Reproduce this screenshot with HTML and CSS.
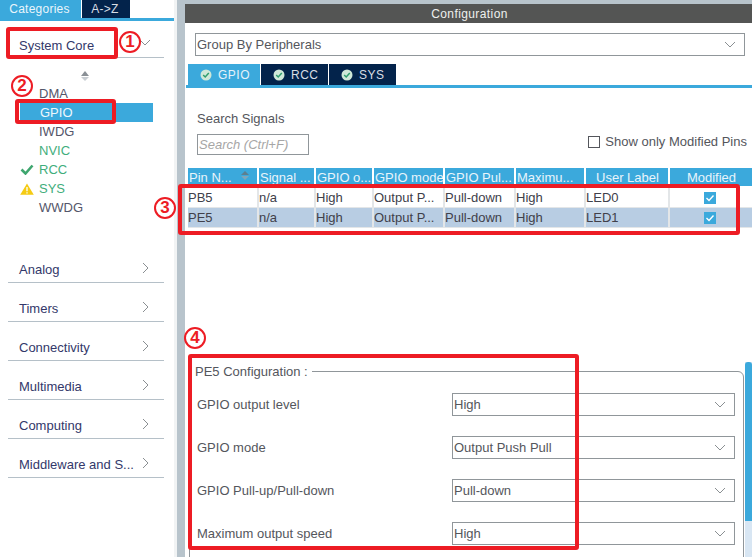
FILE: index.html
```html
<!DOCTYPE html>
<html lang="en">
<head>
<meta charset="utf-8">
<title>Pinout and Configuration</title>
<link rel="stylesheet" href="styles.css">
</head>
<body>
<div class="app">
  <aside class="side">
    <div class="side-tabs">
      <div class="side-tab on">Categories</div>
      <div class="side-tab">A-&gt;Z</div>
    </div>
    <div class="cat open"><span>System Core</span>
      <svg class="chev-d" width="12" height="8" viewBox="0 0 12 8"><path d="M1 1l5 5 5-5" fill="none" stroke="#8a8f92"/></svg>
    </div>
    <div class="sorter"><i class="up"></i><i class="down"></i></div>
    <ul class="tree">
      <li>DMA</li>
      <li class="sel">GPIO</li>
      <li>IWDG</li>
      <li class="green">NVIC</li>
      <li class="green"><svg class="mark" width="14" height="11" viewBox="0 0 14 11"><path d="M1.5 5.5l4 4 7-8" fill="none" stroke="#3fa66f" stroke-width="2.6"/></svg>RCC</li>
      <li class="green"><svg class="mark" width="14" height="12" viewBox="0 0 14 12"><path d="M7 0.5L13.8 11.8H0.2z" fill="#f5cb13"/><path d="M7 4v4.2M7 9.2v1.4" stroke="#fff" stroke-width="1.3"/></svg>SYS</li>
      <li>WWDG</li>
    </ul>
    <div class="cats">
      <div class="cat"><span>Analog</span><svg class="chev-r" width="8" height="12" viewBox="0 0 8 12"><path d="M1 1l5 5-5 5" fill="none" stroke="#8a8f92"/></svg></div>
      <div class="cat"><span>Timers</span><svg class="chev-r" width="8" height="12" viewBox="0 0 8 12"><path d="M1 1l5 5-5 5" fill="none" stroke="#8a8f92"/></svg></div>
      <div class="cat"><span>Connectivity</span><svg class="chev-r" width="8" height="12" viewBox="0 0 8 12"><path d="M1 1l5 5-5 5" fill="none" stroke="#8a8f92"/></svg></div>
      <div class="cat"><span>Multimedia</span><svg class="chev-r" width="8" height="12" viewBox="0 0 8 12"><path d="M1 1l5 5-5 5" fill="none" stroke="#8a8f92"/></svg></div>
      <div class="cat"><span>Computing</span><svg class="chev-r" width="8" height="12" viewBox="0 0 8 12"><path d="M1 1l5 5-5 5" fill="none" stroke="#8a8f92"/></svg></div>
      <div class="cat"><span>Middleware and S...</span><svg class="chev-r" width="8" height="12" viewBox="0 0 8 12"><path d="M1 1l5 5-5 5" fill="none" stroke="#8a8f92"/></svg></div>
    </div>
  </aside>
  <div class="split"></div>
  <main class="main">
    <header class="title">Configuration</header>
    <div class="select group-by"><span>Group By Peripherals</span><svg width="12" height="8" viewBox="0 0 12 8"><path d="M1 1l5 5 5-5" fill="none" stroke="#8a8f92"/></svg></div>
    <div class="tabs">
      <div class="tab on"><svg width="12" height="12" viewBox="0 0 12 12"><circle cx="6" cy="6" r="5.5" fill="#cfe8d8"/><path d="M3.2 6l2 2 3.6-4" fill="none" stroke="#2f9e6d" stroke-width="1.5"/></svg>GPIO</div>
      <div class="tab"><svg width="12" height="12" viewBox="0 0 12 12"><circle cx="6" cy="6" r="5.5" fill="#cfe8d8"/><path d="M3.2 6l2 2 3.6-4" fill="none" stroke="#2f9e6d" stroke-width="1.5"/></svg>RCC</div>
      <div class="tab"><svg width="12" height="12" viewBox="0 0 12 12"><circle cx="6" cy="6" r="5.5" fill="#cfe8d8"/><path d="M3.2 6l2 2 3.6-4" fill="none" stroke="#2f9e6d" stroke-width="1.5"/></svg>SYS</div>
    </div>
    <div class="search">
      <div class="search-left">
        <div class="search-label">Search Signals</div>
        <div class="search-input">Search (Ctrl+F)</div>
      </div>
      <label class="only-mod"><span class="box"></span>Show only Modified Pins</label>
    </div>
    <div class="grid head">
      <div>Pin N...<i class="h-sort"></i></div><div>Signal ...</div><div>GPIO o...</div><div>GPIO mode</div><div>GPIO Pul...</div><div>Maximu...</div><div class="c">User Label</div><div class="c">Modified</div>
    </div>
    <div class="grid row">
      <div>PB5</div><div>n/a</div><div>High</div><div>Output P...</div><div>Pull-down</div><div>High</div><div>LED0</div><div class="c"><span class="tick"><svg width="12" height="12" viewBox="0 0 12 12"><path d="M2.5 6l2.5 2.5 4.5-5" fill="none" stroke="#fff" stroke-width="1.4"/></svg></span></div>
    </div>
    <div class="grid row alt">
      <div>PE5</div><div>n/a</div><div>High</div><div>Output P...</div><div>Pull-down</div><div>High</div><div>LED1</div><div class="c"><span class="tick"><svg width="12" height="12" viewBox="0 0 12 12"><path d="M2.5 6l2.5 2.5 4.5-5" fill="none" stroke="#fff" stroke-width="1.4"/></svg></span></div>
    </div>
    <section class="config">
      <div class="legend">PE5 Configuration :</div>
      <div class="field"><span>GPIO output level</span><div class="select"><span>High</span><svg width="12" height="8" viewBox="0 0 12 8"><path d="M1 1l5 5 5-5" fill="none" stroke="#8a8f92"/></svg></div></div>
      <div class="field"><span>GPIO mode</span><div class="select"><span>Output Push Pull</span><svg width="12" height="8" viewBox="0 0 12 8"><path d="M1 1l5 5 5-5" fill="none" stroke="#8a8f92"/></svg></div></div>
      <div class="field"><span>GPIO Pull-up/Pull-down</span><div class="select"><span>Pull-down</span><svg width="12" height="8" viewBox="0 0 12 8"><path d="M1 1l5 5 5-5" fill="none" stroke="#8a8f92"/></svg></div></div>
      <div class="field"><span>Maximum output speed</span><div class="select"><span>High</span><svg width="12" height="8" viewBox="0 0 12 8"><path d="M1 1l5 5 5-5" fill="none" stroke="#8a8f92"/></svg></div></div>
    </section>
    <div class="scroll"><div class="thumb"></div></div>
  </main>
</div>
<div class="note n1"></div>
<div class="note n2"></div>
<div class="note n3"></div>
<div class="note n4"></div>
<div class="badge b1">1</div>
<div class="badge b2">2</div>
<div class="badge b3">3</div>
<div class="badge b4">4</div>
</body>
</html>
```
FILE: styles.css
```css
* { box-sizing: border-box; }
html, body { margin: 0; padding: 0; height: 100%; overflow: hidden; background: #fff; }
body { font: 13px/1 "Liberation Sans", Arial, sans-serif; color: #54565c; position: relative; }
.app { display: flex; height: 557px; }

.side { width: 174px; flex: none; background: #fff; }
.side-tabs { display: flex; gap: 1px; height: 21px; border-bottom: 3px solid #3ba9dc; width: 176px; }
.side-tab { width: 48px; background: #03234b; color: #d8dde4; display: flex; align-items: center; justify-content: center; font-size: 12px; letter-spacing: 0.25px; height: 18px; padding: 0 2px 0 0; }
.side-tab.on { width: 81px; background: #3ba9dc; color: #eaf5fb; }

.cat { display: flex; align-items: center; justify-content: space-between; margin-left: 8px; width: 156px; padding: 0 14px 0 11px; border-bottom: 1px solid #b5c0c8; color: #33386a; }
.cat.open { height: 37px; padding-top: 12px; padding-right: 15px; }
.chev-d { margin-right: -2px; margin-top: -4px; }
.chev-r { margin-top: -3px; }

.sorter { display: flex; flex-direction: column; align-items: center; gap: 1px; width: 170px; margin-top: 13px; height: 8px; }
.sorter i { flex: none; width: 0; height: 0; border-left: 4px solid transparent; border-right: 4px solid transparent; }
.sorter .up { border-bottom: 5px solid #8a9096; }
.sorter .down { border-top: 4px solid #c8cdd2; }

.tree { list-style: none; margin: 5px 0 0 20px; padding: 0; width: 133px; }
.tree li { height: 19px; line-height: 19px; padding-left: 19px; position: relative; color: #54566a; }
.tree .sel { background: #3ba9dc; color: #eef7fc; padding-left: 20px; }
.tree .green { color: #3fae7c; }
.mark { position: absolute; left: 0; top: 4px; }

.cats { margin-top: 27px; }
.cats .cat { height: 39px; padding: 13px 14px 0 11px; }

.split { width: 11px; flex: none; background: linear-gradient(to right, #f1f3f4 0 3px, #b8c4cc 3px 11px); }

.main { flex: 1; min-width: 0; position: relative; padding-top: 4px; background: linear-gradient(#b8c4cc 0 4px, #fff 4px); overflow: hidden; }
.title { height: 19px; background: #545554; color: #eef0ee; display: flex; align-items: center; justify-content: center; padding-left: 2px; font-size: 12px; letter-spacing: 0.4px; }

.select { display: flex; align-items: center; justify-content: space-between; height: 23px; border: 1px solid #90969a; background: #fff; padding: 0 8px 0 1px; }
.group-by { margin: 10px 7px 0 10px; }

.tabs { display: flex; gap: 1px; margin: 8px 0 0 1px; height: 24px; border-bottom: 3px solid #3ba9dc; padding-left: 2px; }
.tab { width: 67px; height: 21px; background: #03234b; color: #d8dde4; display: flex; align-items: center; gap: 6px; padding-left: 12px; font-size: 12px; letter-spacing: 0.5px; }
.tab.on { width: 72px; background: #3ba9dc; color: #e4f2fa; }

.search { display: flex; justify-content: space-between; align-items: flex-end; margin: 24px 5px 0 12px; }
.search-label { margin-bottom: 9px; }
.search-input { width: 112px; height: 21px; border: 1px solid #90969a; color: #a6a6a6; font-style: italic; line-height: 19px; padding-left: 1px; }
.only-mod { display: flex; align-items: center; gap: 5px; margin-bottom: 7px; }
.box { width: 12px; height: 12px; border: 1px solid #54565c; }

.grid { display: grid; grid-template-columns: 71px 57px 58px 71px 71px 70px 84px 82px; margin-left: 3px; }
.head { margin-top: 13px; height: 18px; color: #e8f4fb; }
.head > div { background: #3ba9dc; margin-right: 2px; height: 18px; line-height: 20px; padding-left: 1px; position: relative; white-space: nowrap; overflow: hidden; }
.head > div:last-child { margin-right: 0; }
.head .c, .row .c { text-align: center; }
.h-sort { position: absolute; right: 8px; top: 3px; width: 0; height: 0; border-left: 4px solid transparent; border-right: 4px solid transparent; border-bottom: 4px solid #5d7f90; }
.h-sort::after { content: ""; position: absolute; left: -4px; top: 5px; width: 0; height: 0; border-left: 4px solid transparent; border-right: 4px solid transparent; border-top: 4px solid #7fa6ba; }

.row { height: 20px; color: #40404a; background: #fff; border-bottom: 1px solid #e3e6e8; }
.head + .row { margin-top: 2px; }
.row > div { line-height: 20px; padding-left: 0; border-right: 2px solid #e3e6e8; white-space: nowrap; overflow: hidden; }
.row > div:last-child { border-right: 0; }
.row.alt { background: #b8cde3; }
.tick { display: inline-flex; width: 12px; height: 12px; background: #3ba9dc; vertical-align: -2px; margin-right: 3px; }

.config { position: relative; margin: 143px 8px 0 4px; height: 300px; border: 1px solid #90969a; border-radius: 0 6px 0 0; padding: 0 8px 0 7px; }
.legend { position: absolute; left: 1px; top: -7px; background: #fff; padding: 0 4px; line-height: 13px; }
.field { display: flex; align-items: center; justify-content: space-between; height: 23px; margin-top: 20px; }
.legend + .field { margin-top: 21px; }
.field > .select { width: 283px; }

.scroll { position: absolute; right: 0; top: 362px; bottom: 0; width: 7px; background: #d8e6f3; }
.thumb { height: 159px; background: #3ba9dc; border-radius: 3px 3px 0 0; }

.note { position: absolute; border: 4px solid #ed1c24; border-radius: 3px; pointer-events: none; }
.n1 { left: 6px; top: 27px; width: 112px; height: 32px; }
.n2 { left: 15px; top: 99px; width: 101px; height: 25px; }
.n3 { left: 178px; top: 184px; width: 562px; height: 51px; }
.n4 { left: 188px; top: 354px; width: 391px; height: 196px; }

.badge { position: absolute; width: 22px; height: 22px; border: 2px solid #ed1c24; border-radius: 50%; background: #fff; color: #ed1c24; font-weight: 700; font-size: 17px; line-height: 18px; text-align: center; }
.b1 { left: 119px; top: 31px; }
.b2 { left: 11px; top: 75px; }
.b3 { left: 154px; top: 197px; }
.b4 { left: 184px; top: 327px; }
```
